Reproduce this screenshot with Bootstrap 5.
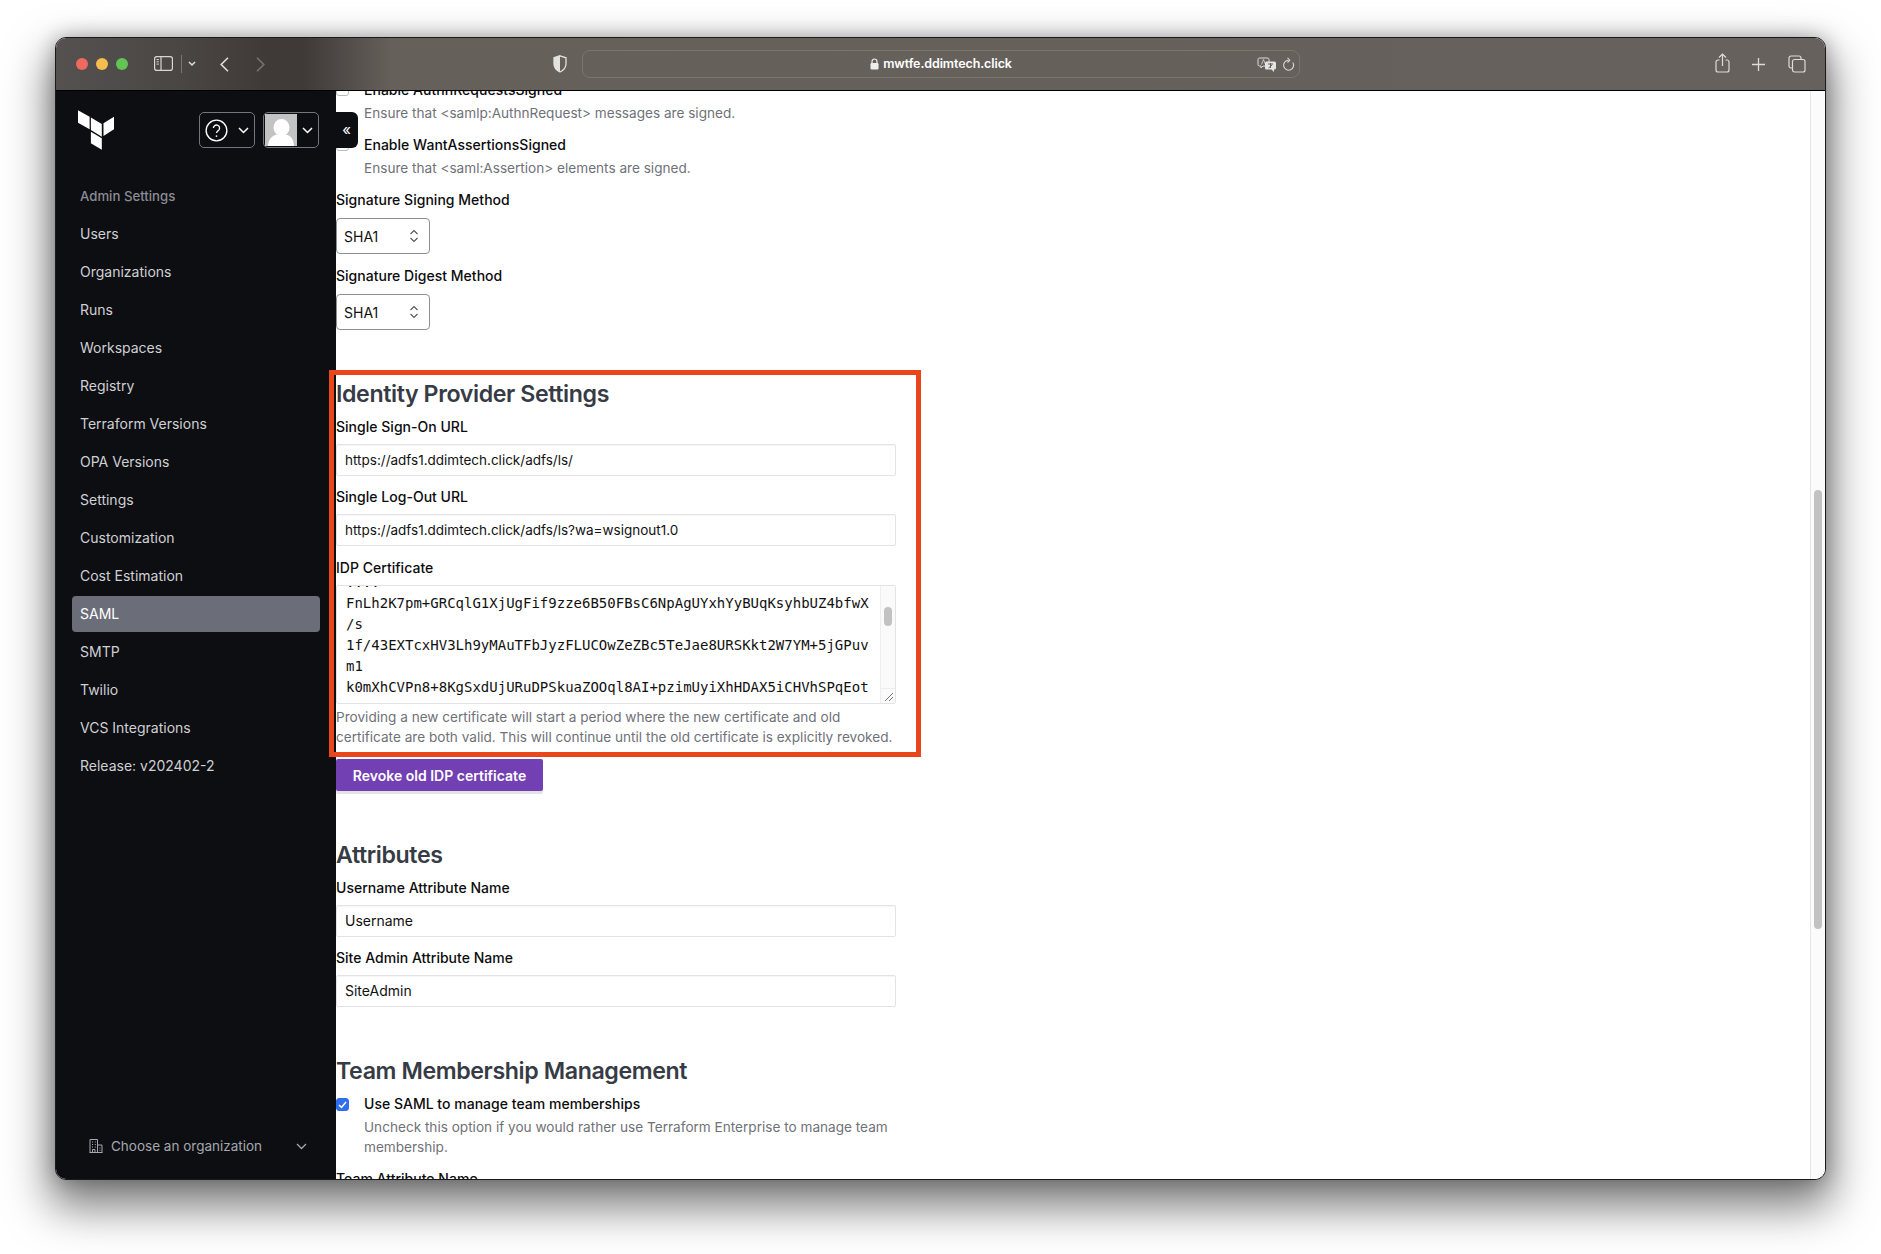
<!doctype html>
<html lang="en">
<head>
<meta charset="utf-8">
<title>SAML</title>
<link href="https://cdn.jsdelivr.net/npm/bootstrap@5.3.0/dist/css/bootstrap.min.css" rel="stylesheet">
<style>
html,body{height:100%}
body{margin:0;background:#fff;font-family:Inter,"Liberation Sans",sans-serif;font-size:14px;color:#000;overflow:hidden;padding:37px 55px 0 55px}
.mac-win{position:relative;width:1771px;height:1143px;border-radius:11px;overflow:hidden;box-shadow:0 22px 44px 6px rgba(0,0,0,.5),0 0 20px rgba(0,0,0,.28);background:#fff;border:1px solid #1a1a1a}
.mac-bar{height:53px;flex:none;background:linear-gradient(90deg,#555150 0,#4a4644 7%,#3f3a38 12%,#3f3a38 14%,#66605b 19%,#67615d 100%);border-bottom:1px solid #000;padding-left:20px}
.dot{width:12px;height:12px;border-radius:50%;display:block}
.url-box{position:absolute;left:526px;top:12px;width:718px;height:28px;border:1px solid #7b7570;border-radius:8px;color:#fff;font-size:12.5px;font-weight:600;letter-spacing:-.1px}
.mac-ic{position:absolute;display:block}
.mac-sep{position:absolute;left:125px;top:17px;width:1px;height:18px;background:#7a7571}
.mac-body{height:1088px}
.side{width:280px;flex:none;background:#0d0e12;color:#cfd0d4;font-size:14px}
.side-top{height:90px;padding:19px 17px 0 22px}
.logo{width:36px;height:40px;margin-right:auto}
.hd-btn{width:56px;height:36px;border:1px solid #74767d;border-radius:5px;margin-right:8px;padding:1px;color:#fff;margin-top:2px}
.hd-btn.last{margin-right:0}
.side-list{padding:0 16px 0 16px;margin:0;list-style:none}
.side-list li{height:38px;line-height:38px;padding-left:8px;white-space:nowrap}
.side-list li.head{color:#8a8c94;font-size:13.2px;font-weight:500;height:32px;line-height:32px;margin-top:-1px;margin-bottom:3px}
.side-list li.on{background:#6b6e79;color:#fff;border-radius:4px;height:36px;line-height:36px;margin:1px 0}
.org{margin-top:auto;height:66px;padding:0 29px 0 33px;color:#a5a7ae;font-size:13.5px}
.pane{flex:1;min-width:0;overflow:hidden;background:#fff}
.flowc{width:561px;margin-top:-11px}
.lbl{display:block;font-weight:500;font-size:14px;line-height:20px;margin:0;color:#0c0c0e;letter-spacing:.02px}
.chk-row{position:relative;padding-left:28px}
.chk{position:absolute;left:0;top:3px;width:13px;height:13px;border:1px solid #bbb;border-radius:3px;background:#fff}
.chk.yes{background:#2f6fed;border-color:#2f6fed;top:4px;display:flex;align-items:center;justify-content:center}
.hlp{color:#6f7178;font-size:13.6px;line-height:20px;margin:0}
.sel{width:94px;height:36px;border:1px solid #8e9097;border-radius:4px;padding:0 10px 0 7px;color:#111;margin:8px 0 12px}
.sec-h{font-size:23.2px;font-weight:600;letter-spacing:-.4px;line-height:30px;color:#363b45;margin:0}
.inp{height:32px;border:1px solid #e2e3e6;border-radius:2px;padding:0 8px;line-height:30px;color:#111;width:560px;box-shadow:inset 0 1px 1px rgba(0,0,0,.04);white-space:nowrap}
.inp.urlv{font-size:13.5px}
.cert{height:119px;border:1px solid #e2e3e6;border-radius:2px;position:relative;overflow:hidden;width:560px}
.cert-tx{font-family:"DejaVu Sans Mono","Liberation Mono",monospace;font-size:14px;line-height:21px;padding:0 0 0 9px;margin:-14px 0 0;color:#111;white-space:pre;background:none;overflow:hidden}
.cert-sb{position:absolute;right:0;top:0;bottom:0;width:15px;background:#fafafa;border-left:1px solid #eee}
.cert-th{position:absolute;left:3px;top:21px;width:8px;height:19px;border-radius:4px;background:#c2c2c2}
.cert-grip{position:absolute;right:0;bottom:0;width:15px;height:15px;background:#fafafa;border-top:1px solid #eee;border-left:1px solid #eee}
.revoke{background:#7340b4;color:#fff;font-weight:600;font-size:14px;border:0;border-radius:2px;height:32px;width:207px;padding:0;box-shadow:0 3px 0 #e3e3e6}
.red-box{position:absolute;left:273px;top:332px;width:592px;height:387px;border:5px solid #e9461b;pointer-events:none}
.coll{position:absolute;left:279px;top:74px;width:23px;height:36px;background:#0d0e12;color:#fff;border-radius:0 6px 6px 0;text-align:center;line-height:36px;font-size:15px}
.vsb{width:15px;flex:none;background:#fbfbfb;border-left:1px solid #e6e6e6;padding:399px 3px 0 3px}
.vsb-th{height:439px;background:#c2c2c2;border-radius:4px}
</style>
</head>
<body>
<div class="mac-win d-flex flex-column">
  <div class="mac-bar d-flex align-items-center">
    <div class="d-flex gap-2">
      <span class="dot" style="background:#ee6a5e"></span><span class="dot" style="background:#f5bd4f"></span><span class="dot" style="background:#61c454"></span>
    </div>
    <svg class="mac-ic" style="left:98px;top:18px" width="19" height="15" viewBox="0 0 19 15" fill="none" stroke="#d8d6d3" stroke-width="1.200"><rect x=".6" y=".6" width="17.800" height="13.800" rx="2.200"/><path d="M7 .6v13.800"/><path d="M2.500 3.500h2.400M2.500 5.800h2.400M2.500 8.100h2.400" stroke-width="1"/></svg>
    <span class="mac-sep"></span>
    <svg class="mac-ic" style="left:132px;top:23px" width="8" height="6" viewBox="0 0 8 6" fill="none" stroke="#e0dedb" stroke-width="1.500"><path d="M1 1l3 3 3-3"/></svg>
    <svg class="mac-ic" style="left:164px;top:19px" width="9" height="15" viewBox="0 0 9 15" fill="none" stroke="#dedcd9" stroke-width="1.600"><path d="M8 .8L1.200 7.500 8 14.200"/></svg>
    <svg class="mac-ic" style="left:200px;top:19px" width="9" height="15" viewBox="0 0 9 15" fill="none" stroke="#77726d" stroke-width="1.600"><path d="M1 .8l6.800 6.700L1 14.200"/></svg>
    <svg class="mac-ic" style="left:497px;top:17px" width="14" height="18" viewBox="0 0 14 18"><path d="M7 .8l6 2v6c0 4-2.600 6.600-6 8.200-3.400-1.600-6-4.200-6-8.200v-6z" fill="none" stroke="#e4e2df" stroke-width="1.300"/><path d="M7 .8l-6 2v6c0 4 2.600 6.600 6 8.200z" fill="#e4e2df"/></svg>
    <div class="url-box d-flex align-items-center justify-content-center">
      <svg width="9" height="12" viewBox="0 0 9 12" class="me-1"><path d="M2 5.500V3.500a2.500 2.500 0 015 0v2" fill="none" stroke="#eee" stroke-width="1.200"/><rect x=".5" y="5" width="8" height="6.500" rx="1.200" fill="#eee"/></svg>
      <span>mwtfe.ddimtech.click</span>
      <svg class="mac-ic" style="left:674px;top:6px" width="20" height="15" viewBox="0 0 20 15"><path d="M2.500 1h8a1.500 1.500 0 011.500 1.500v5A1.500 1.500 0 0110.500 9H6l-2 2V9H2.500A1.500 1.500 0 011 7.500v-5A1.500 1.500 0 012.500 1z" fill="none" stroke="#ddd" stroke-width="1"/><path d="M6.500 2.500L4.500 7.500M6.500 2.500l2 5" stroke="#ddd" stroke-width=".8" fill="none"/><path d="M9.500 4.500h8A1.500 1.500 0 0119 6v5a1.500 1.500 0 01-1.500 1.500H17V15l-2.500-2.500h-5A1.500 1.500 0 018 11V6a1.500 1.500 0 011.500-1.500z" fill="#e6e4e1"/><path d="M11 7h5M13.500 6v5M11.500 11l3.500-3" stroke="#67615d" stroke-width="1" fill="none"/></svg>
      <svg class="mac-ic" style="left:699px;top:6px" width="13" height="15" viewBox="0 0 13 15" fill="none" stroke="#d8d6d3" stroke-width="1.100"><path d="M10.800 5.500a5 5 0 11-4.300-2.300"/><path d="M5.500 .8l2.300 2.400-2.300 2.300"/></svg>
    </div>
    <svg class="mac-ic" style="left:1659px;top:15px" width="15" height="20" viewBox="0 0 15 20" fill="none" stroke="#dedcd9" stroke-width="1.200"><path d="M7.500 13V1M4 4.500L7.500 1 11 4.500"/><path d="M4.500 7H3a2 2 0 00-2 2v8a2 2 0 002 2h9a2 2 0 002-2V9a2 2 0 00-2-2h-1.500"/></svg>
    <svg class="mac-ic" style="left:1696px;top:20px" width="13" height="13" viewBox="0 0 13 13" stroke="#dedcd9" stroke-width="1.300"><path d="M6.500 0v13M0 6.500h13"/></svg>
    <svg class="mac-ic" style="left:1732px;top:17px" width="18" height="18" viewBox="0 0 18 18" fill="none" stroke="#dedcd9" stroke-width="1.200"><rect x="4.500" y="4.500" width="12.500" height="12.500" rx="2"/><path d="M4.500 13H3a2 2 0 01-2-2V3a2 2 0 012-2h8a2 2 0 012 2v1.500"/></svg>
  </div>
  <div class="mac-body d-flex">
    <aside class="side d-flex flex-column">
      <div class="side-top d-flex align-items-start">
        <svg class="logo" viewBox="0 0 36.300 40" fill="#fff"><polygon points="0,0 11.700,6.700 11.700,19.300 0,12.700"/><polygon points="13,7.300 24,14 24,26.700 13,20"/><polygon points="25.700,13.300 36.300,6.700 36.300,19.300 25.700,26"/><polygon points="13,21.700 24,28.300 24,40 13,33.300"/></svg>
        <div class="hd-btn d-flex align-items-center justify-content-between">
          <svg class="ms-1" width="23" height="23" viewBox="0 0 24 24" fill="none" stroke="#fff" stroke-width="1.400"><circle cx="12" cy="12" r="10.800"/><path d="M8.800 9.500a3.200 3.200 0 116 1.500c-.8 1.200-2.800 1.800-2.800 3.500"/><circle cx="12" cy="17.800" r=".9" fill="#fff" stroke="none"/></svg>
          <svg style="margin-right:4px" width="11" height="7" viewBox="0 0 11 7" fill="none" stroke="#fff" stroke-width="1.500"><path d="M1 1l4.500 4.500L10 1"/></svg>
        </div>
        <div class="hd-btn last d-flex align-items-center justify-content-between">
          <svg width="32" height="32" viewBox="0 0 32 32"><rect width="32" height="32" fill="#c3c3c3"/><ellipse cx="16.500" cy="13.500" rx="8" ry="8.500" fill="#fff"/><path d="M3 32c.5-8 5-12 13.500-12S28.500 24 29 32z" fill="#fff"/></svg>
          <svg style="margin-right:4px" width="11" height="7" viewBox="0 0 11 7" fill="none" stroke="#fff" stroke-width="1.500"><path d="M1 1l4.500 4.500L10 1"/></svg>
        </div>
      </div>
      <ul class="side-list">
        <li class="head">Admin Settings</li>
        <li>Users</li><li>Organizations</li><li>Runs</li><li>Workspaces</li><li>Registry</li><li>Terraform Versions</li><li>OPA Versions</li><li>Settings</li><li>Customization</li><li>Cost Estimation</li>
        <li class="on">SAML</li>
        <li>SMTP</li><li>Twilio</li><li>VCS Integrations</li><li>Release: v202402-2</li>
      </ul>
      <div class="org d-flex align-items-center">
        <svg style="margin-right:8px" width="14" height="14" viewBox="0 0 14 14" fill="none" stroke="#a5a7ae" stroke-width="1"><path d="M1 13.500V.5h7.500v13M8.500 6H13v7.500M.5 13.500h13M3 3h1M5.800 3h1M3 5.500h1M5.800 5.500h1M3 8h1M5.800 8h1M3.500 13.500v-3h2.500v3M10.500 9h1M10.500 11.300h1"/></svg>
        <span class="flex-grow-1">Choose an organization</span>
        <svg width="11" height="7" viewBox="0 0 11 7" fill="none" stroke="#a5a7ae" stroke-width="1.300"><path d="M1 1l4.500 4.500L10 1"/></svg>
      </div>
    </aside>
    <main class="pane">
      <div class="flowc">
        <div class="chk-row"><span class="chk"></span><span class="lbl">Enable AuthnRequestsSigned</span><p class="hlp" style="margin-top:3px">Ensure that &lt;samlp:AuthnRequest&gt; messages are signed.</p></div>
        <div class="chk-row" style="margin-top:12px"><span class="chk"></span><span class="lbl">Enable WantAssertionsSigned</span><p class="hlp" style="margin-top:3px">Ensure that &lt;saml:Assertion&gt; elements are signed.</p></div>
        <label class="lbl" style="margin-top:12px">Signature Signing Method</label>
        <div class="sel d-flex align-items-center justify-content-between"><span>SHA1</span><svg width="10" height="14" viewBox="0 0 10 14" fill="none" stroke="#555" stroke-width="1.100"><path d="M1.500 5L5 1.500 8.500 5M1.500 9L5 12.500 8.500 9"/></svg></div>
        <label class="lbl">Signature Digest Method</label>
        <div class="sel d-flex align-items-center justify-content-between"><span>SHA1</span><svg width="10" height="14" viewBox="0 0 10 14" fill="none" stroke="#555" stroke-width="1.100"><path d="M1.500 5L5 1.500 8.500 5M1.500 9L5 12.500 8.500 9"/></svg></div>
        <h2 class="sec-h" style="margin-top:49px">Identity Provider Settings</h2>
        <label class="lbl" style="margin-top:8px">Single Sign-On URL</label>
        <div class="inp urlv" style="margin-top:7px">https://adfs1.ddimtech.click/adfs/ls/</div>
        <label class="lbl" style="margin-top:11px">Single Log-Out URL</label>
        <div class="inp urlv" style="margin-top:7px">https://adfs1.ddimtech.click/adfs/ls?wa=wsignout1.0</div>
        <label class="lbl" style="margin-top:12px">IDP Certificate</label>
        <div class="cert" style="margin-top:7px">
<pre class="cert-tx">....
FnLh2K7pm+GRCqlG1XjUgFif9zze6B50FBsC6NpAgUYxhYyBUqKsyhbUZ4bfwX
/s
1f/43EXTcxHV3Lh9yMAuTFbJyzFLUCOwZeZBc5TeJae8URSKkt2W7YM+5jGPuv
m1
k0mXhCVPn8+8KgSxdUjURuDPSkuaZOOql8AI+pzimUyiXhHDAX5iCHVhSPqEot
G+</pre>
          <div class="cert-sb"><div class="cert-th"></div></div>
          <div class="cert-grip"><svg class="d-block" width="14" height="14" viewBox="0 0 14 14" stroke="#777" stroke-width="1"><path d="M4 12l8-8M8 12l4-4"/></svg></div>
        </div>
        <p class="hlp" style="margin-top:3px">Providing a new certificate will start a period where the new certificate and old certificate are both valid. This will continue until the old certificate is explicitly revoked.</p>
        <button class="revoke" style="margin-top:12px">Revoke old IDP certificate</button>
        <h2 class="sec-h" style="margin-top:49px">Attributes</h2>
        <label class="lbl" style="margin-top:8px">Username Attribute Name</label>
        <div class="inp" style="margin-top:7px">Username</div>
        <label class="lbl" style="margin-top:11px">Site Admin Attribute Name</label>
        <div class="inp" style="margin-top:7px">SiteAdmin</div>
        <h2 class="sec-h" style="margin-top:49px">Team Membership Management</h2>
        <div class="chk-row" style="margin-top:8px"><span class="chk yes"><svg width="9" height="8" viewBox="0 0 9 8" fill="none" stroke="#fff" stroke-width="1.500"><path d="M1 4l2.500 2.500L8 1"/></svg></span><span class="lbl">Use SAML to manage team memberships</span><p class="hlp" style="margin-top:3px">Uncheck this option if you would rather use Terraform Enterprise to manage team membership.</p></div>
        <label class="lbl" style="margin-top:12px">Team Attribute Name</label>
      </div>
    </main>
    <div class="vsb"><div class="vsb-th"></div></div>
  </div>
  <div class="coll">«</div>
  <div class="red-box"></div>
</div>
<script src="https://cdn.jsdelivr.net/npm/bootstrap@5.3.0/dist/js/bootstrap.bundle.min.js"></script>
</body>
</html>
